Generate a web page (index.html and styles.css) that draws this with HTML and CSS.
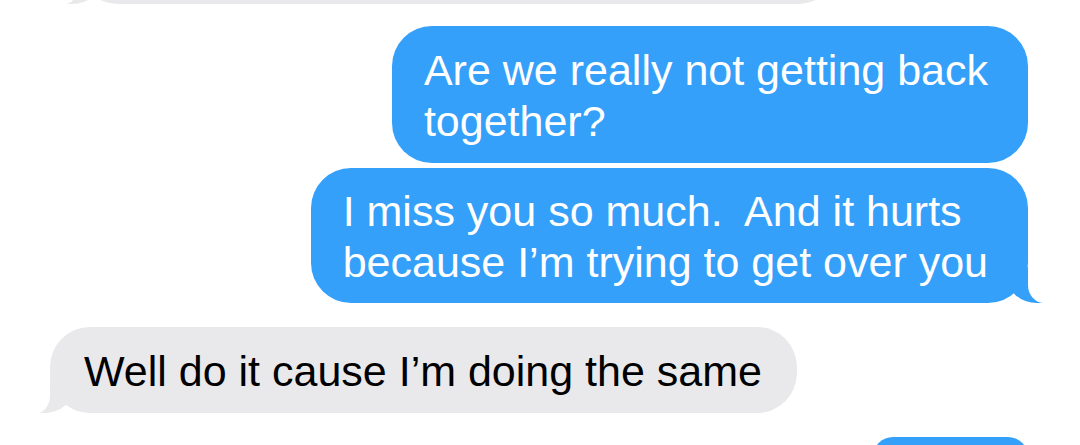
FILE: index.html
```html
<!DOCTYPE html>
<html lang="en">
<head>
<meta charset="utf-8">
<title>Messages</title>
<link rel="stylesheet" href="styles.css">
</head>
<body>
<main class="thread">
  <div class="bubble received tail top-cut"></div>
  <div class="bubble sent first">Are we really not getting back<br>together?</div>
  <div class="bubble sent tail second">I miss you so much.&nbsp; And it hurts<br>because I’m trying to get over you</div>
  <div class="bubble received tail reply">Well do it cause I’m doing the same</div>
  <div class="bubble sent last"></div>
</main>
</body>
</html>
```
FILE: styles.css
```css
html, body {
  margin: 0;
  padding: 0;
  background: #ffffff;
  overflow: hidden;
}

.thread {
  display: flex;
  flex-direction: column;
  padding: 0 52px 0 50px;
  height: 445px;
  overflow: hidden;
  box-sizing: border-box;
  font-family: "Liberation Sans", Arial, sans-serif;
  font-size: 43px;
  line-height: 51px;
}

.bubble {
  position: relative;
  flex-shrink: 0;
  white-space: nowrap;
  border-radius: 40px;
  box-sizing: border-box;
  z-index: 0;
}

.sent {
  align-self: flex-end;
  background: #35a0fa;
  color: #ffffff;
  padding: 19px 40px 16px 32px;
}

.received {
  align-self: flex-start;
  background: #e9e9eb;
  color: #000000;
  padding: 19px 35px 16px 34px;
}

.top-cut {
  margin-top: -76px;
  margin-left: 28px;
  width: 760px;
  height: 80px;
}

.first {
  margin-top: 22px;
}

.second {
  margin-top: 5px;
  padding-top: 18px;
  padding-bottom: 15px;
}

.reply {
  margin-top: 24px;
}

.last {
  margin-top: 24px;
  width: 155px;
  height: 40px;
}

/* tails */
.sent.tail::before {
  content: "";
  position: absolute;
  right: -15px;
  bottom: 0;
  width: 36px;
  height: 36px;
  background: #35a0fa;
  border-bottom-left-radius: 30px 26px;
  z-index: -1;
}

.sent.tail::after {
  content: "";
  position: absolute;
  right: -40px;
  bottom: 0;
  width: 40px;
  height: 36px;
  background: #ffffff;
  border-bottom-left-radius: 16px 18px;
  z-index: -1;
}

.received.tail::before {
  content: "";
  position: absolute;
  left: -12px;
  bottom: 0;
  width: 36px;
  height: 36px;
  background: #e9e9eb;
  border-bottom-right-radius: 30px 26px;
  z-index: -1;
}

.received.tail::after {
  content: "";
  position: absolute;
  left: -40px;
  bottom: 0;
  width: 40px;
  height: 36px;
  background: #ffffff;
  border-bottom-right-radius: 13px 18px;
  z-index: -1;
}
```
